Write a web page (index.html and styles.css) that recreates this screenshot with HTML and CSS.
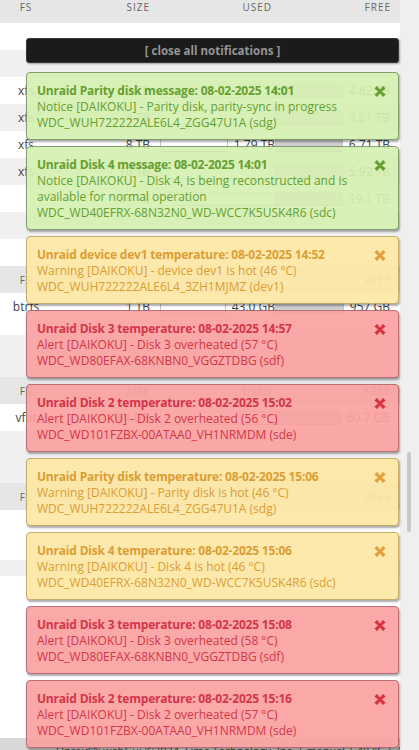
FILE: index.html
```html
<!DOCTYPE html>
<html lang="en">
<head>
    <meta charset="UTF-8">
    <title>Main - DAIKOKU</title>
    <link rel="stylesheet" href="styles.css">
</head>
<body>
    <div class="wrap">
        <div class="page">
            <div class="row head"><span>FS</span><span>SIZE</span><span>USED</span><span>FREE</span></div>
            <div class="row"></div>
            <div class="row alt"></div>
            <div class="row"><span>xfs</span><span>12 TB</span><span class="bar"><i></i></span><span class="bar free"><i></i>4.82 TB</span></div>
            <div class="row alt"><span>xfs</span><span>4 TB</span><span class="bar"><i></i></span><span class="bar free"><i></i>3.61 TB</span></div>
            <div class="row"><span>xfs</span><span>8 TB</span><span class="bar"><i></i><b>1.79 TB</b></span><span class="bar free"><i></i>6.71 TB</span></div>
            <div class="row alt"><span>xfs</span><span>10 TB</span><span class="bar"><i></i></span><span class="bar free"><i></i>5.92 TB</span></div>
            <div class="row"><span></span><span>34 TB</span><span class="bar"><i></i></span><span class="bar free"><i></i>19.1 TB</span></div>
            <div class="row alt"></div>
            <div class="row"></div>
            <div class="row head"><span>FS</span><span>SIZE</span><span>USED</span><span>FREE</span></div>
            <div class="row"><span>btrfs</span><span>1 TB</span><span class="bar"><i></i><b>43.0 GB</b></span><span class="bar free"><i></i>957 GB</span></div>
            <div class="gap short"></div>
            <div class="gap grey"></div>
            <div class="row head"><span>FS</span><span>SIZE</span><span>USED</span><span>FREE</span></div>
            <div class="row"><span>vfat</span><span>64 GB</span><span class="bar"><i></i></span><span class="bar free"><i></i>60.7 GB</span></div>
            <div class="gap grey tall"></div>
            <div class="row head"><span>FS</span><span>SIZE</span><span>USED</span><span>FREE</span></div>
            <div class="gap blank"></div>
            <div class="gap grey slim"></div>
            <div class="gap blank long"></div>
            <div class="footer">Unraid® webGui ©2024, Lime Technology, Inc. | manual | 48 °C | 46 °C</div>
        </div>
        <div class="gutter"><div class="thumb"></div></div>
    </div>

    <div class="growl">
        <div class="closer">[ close all notifications ]</div>

        <div class="note normal">
            <div class="note-body">
                <div class="note-title">Unraid Parity disk message: 08-02-2025 14:01</div>
                <div>Notice [DAIKOKU] - Parity disk, parity-sync in progress</div>
                <div>WDC_WUH722222ALE6L4_ZGG47U1A (sdg)</div>
            </div>
            <svg class="note-close" viewBox="0 0 12 12"><path d="M2.7 0.3L6 4.3L9.3 0.3L11.7 2.7L7.7 6L11.7 9.3L9.3 11.7L6 7.7L2.7 11.7L0.3 9.3L4.3 6L0.3 2.7Z"/></svg>
        </div>

        <div class="note normal">
            <div class="note-body">
                <div class="note-title">Unraid Disk 4 message: 08-02-2025 14:01</div>
                <div>Notice [DAIKOKU] - Disk 4, is being reconstructed and is available for normal operation</div>
                <div>WDC_WD40EFRX-68N32N0_WD-WCC7K5USK4R6 (sdc)</div>
            </div>
            <svg class="note-close" viewBox="0 0 12 12"><path d="M2.7 0.3L6 4.3L9.3 0.3L11.7 2.7L7.7 6L11.7 9.3L9.3 11.7L6 7.7L2.7 11.7L0.3 9.3L4.3 6L0.3 2.7Z"/></svg>
        </div>

        <div class="note warning">
            <div class="note-body">
                <div class="note-title">Unraid device dev1 temperature: 08-02-2025 14:52</div>
                <div>Warning [DAIKOKU] - device dev1 is hot (46 °C)</div>
                <div>WDC_WUH722222ALE6L4_3ZH1MJMZ (dev1)</div>
            </div>
            <svg class="note-close" viewBox="0 0 12 12"><path d="M2.7 0.3L6 4.3L9.3 0.3L11.7 2.7L7.7 6L11.7 9.3L9.3 11.7L6 7.7L2.7 11.7L0.3 9.3L4.3 6L0.3 2.7Z"/></svg>
        </div>

        <div class="note alert">
            <div class="note-body">
                <div class="note-title">Unraid Disk 3 temperature: 08-02-2025 14:57</div>
                <div>Alert [DAIKOKU] - Disk 3 overheated (57 °C)</div>
                <div>WDC_WD80EFAX-68KNBN0_VGGZTDBG (sdf)</div>
            </div>
            <svg class="note-close" viewBox="0 0 12 12"><path d="M2.7 0.3L6 4.3L9.3 0.3L11.7 2.7L7.7 6L11.7 9.3L9.3 11.7L6 7.7L2.7 11.7L0.3 9.3L4.3 6L0.3 2.7Z"/></svg>
        </div>

        <div class="note alert">
            <div class="note-body">
                <div class="note-title">Unraid Disk 2 temperature: 08-02-2025 15:02</div>
                <div>Alert [DAIKOKU] - Disk 2 overheated (56 °C)</div>
                <div>WDC_WD101FZBX-00ATAA0_VH1NRMDM (sde)</div>
            </div>
            <svg class="note-close" viewBox="0 0 12 12"><path d="M2.7 0.3L6 4.3L9.3 0.3L11.7 2.7L7.7 6L11.7 9.3L9.3 11.7L6 7.7L2.7 11.7L0.3 9.3L4.3 6L0.3 2.7Z"/></svg>
        </div>

        <div class="note warning">
            <div class="note-body">
                <div class="note-title">Unraid Parity disk temperature: 08-02-2025 15:06</div>
                <div>Warning [DAIKOKU] - Parity disk is hot (46 °C)</div>
                <div>WDC_WUH722222ALE6L4_ZGG47U1A (sdg)</div>
            </div>
            <svg class="note-close" viewBox="0 0 12 12"><path d="M2.7 0.3L6 4.3L9.3 0.3L11.7 2.7L7.7 6L11.7 9.3L9.3 11.7L6 7.7L2.7 11.7L0.3 9.3L4.3 6L0.3 2.7Z"/></svg>
        </div>

        <div class="note warning">
            <div class="note-body">
                <div class="note-title">Unraid Disk 4 temperature: 08-02-2025 15:06</div>
                <div>Warning [DAIKOKU] - Disk 4 is hot (46 °C)</div>
                <div>WDC_WD40EFRX-68N32N0_WD-WCC7K5USK4R6 (sdc)</div>
            </div>
            <svg class="note-close" viewBox="0 0 12 12"><path d="M2.7 0.3L6 4.3L9.3 0.3L11.7 2.7L7.7 6L11.7 9.3L9.3 11.7L6 7.7L2.7 11.7L0.3 9.3L4.3 6L0.3 2.7Z"/></svg>
        </div>

        <div class="note alert">
            <div class="note-body">
                <div class="note-title">Unraid Disk 3 temperature: 08-02-2025 15:08</div>
                <div>Alert [DAIKOKU] - Disk 3 overheated (58 °C)</div>
                <div>WDC_WD80EFAX-68KNBN0_VGGZTDBG (sdf)</div>
            </div>
            <svg class="note-close" viewBox="0 0 12 12"><path d="M2.7 0.3L6 4.3L9.3 0.3L11.7 2.7L7.7 6L11.7 9.3L9.3 11.7L6 7.7L2.7 11.7L0.3 9.3L4.3 6L0.3 2.7Z"/></svg>
        </div>

        <div class="note alert">
            <div class="note-body">
                <div class="note-title">Unraid Disk 2 temperature: 08-02-2025 15:16</div>
                <div>Alert [DAIKOKU] - Disk 2 overheated (57 °C)</div>
                <div>WDC_WD101FZBX-00ATAA0_VH1NRMDM (sde)</div>
            </div>
            <svg class="note-close" viewBox="0 0 12 12"><path d="M2.7 0.3L6 4.3L9.3 0.3L11.7 2.7L7.7 6L11.7 9.3L9.3 11.7L6 7.7L2.7 11.7L0.3 9.3L4.3 6L0.3 2.7Z"/></svg>
        </div>
    </div>
</body>
</html>
```

FILE: styles.css
```css
body { margin: 0; height: 750px; overflow: hidden; background: #f4f4f4; font-family: "Open Sans", Arial, sans-serif; color: #444; }

/* disk tables behind the notifications */
.wrap { display: flex; }
.page { width: 400px; background: #fff; }
.row { display: grid; grid-template-columns: 52px 108px 115px 125px; align-items: center; height: 27px; font-size: 12px; }
.row span:first-child { text-align: center; }
.row span:nth-child(2) { text-align: right; padding-right: 10px; }
.row.alt { background: #f0f0f0; }
.row.head { background: #e6e6e6; height: 27px; font-size: 10px; letter-spacing: 1px; color: #666; }
.row.head:first-child { height: 23px; align-items: start; }
.row.head span:nth-child(3) { text-align: right; padding-right: 3px; }
.row.head span:nth-child(4) { text-align: right; padding-right: 9px; }
.bar { display: flex; align-items: center; gap: 6px; height: 14px; }
.bar i { flex: 1; height: 12px; background: #fff; border: 1px solid #c4c4c4; border-bottom-color: #999; }
.bar b { font-weight: normal; }
.bar.free { padding-right: 10px; }
.bar.free i { background: #cfcfcf; }
.gap { height: 15px; }
.gap.grey { height: 42px; background: #f0f0f0; }
.gap.grey.tall { height: 52px; }
.gap.blank { height: 50px; }
.gap.grey.slim { height: 16px; }
.gap.blank.long { height: 162px; }
.footer { height: 24px; background: #d8d8d8; font-size: 11px; padding: 5px 0 0 56px; color: #444; white-space: nowrap; width: 419px; box-sizing: border-box; }
.gutter { width: 19px; background: #efefef; }
.thumb { margin: 452px 0 0 7px; width: 4px; height: 80px; background: #c9c9c9; border-radius: 2px; }

/* notification stack */
.growl { position: absolute; top: 38px; left: 26px; width: 373px; }
.closer { height: 25px; box-sizing: border-box; background: #1b1b1b; border: 1px solid #3a3a3a; border-radius: 3px; color: #959595; font-size: 11.5px; font-weight: bold; text-align: center; line-height: 23px; margin-bottom: 9px; box-shadow: 1px 1px 2px rgba(0,0,0,.35); }
.note { display: flex; align-items: flex-start; border: 1px solid; border-radius: 4px; padding: 10px 12px 8px 10px; margin-bottom: 6px; font-size: 12px; line-height: 16px; opacity: .93; box-shadow: 1px 2px 2px rgba(0,0,0,.35); }
.note-body { flex: 1; padding-right: 22px; }
.note-title { font-weight: bold; letter-spacing: -0.2px; }
.note-close { width: 12px; height: 11px; margin-top: 3px; stroke-width: .6; stroke-linejoin: round; }

.normal { background: #d6f0b2; border-color: #7d9866; color: #5a9a22; }
.normal .note-close { fill: #5a9a22; stroke: #5a9a22; }
.warning { background: #fee8a6; border-color: #c4a65e; color: #da9727; }
.warning .note-close { fill: #e1952c; stroke: #e1952c; }
.alert { background: #faa2a2; border-color: #b3666a; color: #d0283a; }
.alert .note-close { fill: #d8202e; stroke: #d8202e; }
```
